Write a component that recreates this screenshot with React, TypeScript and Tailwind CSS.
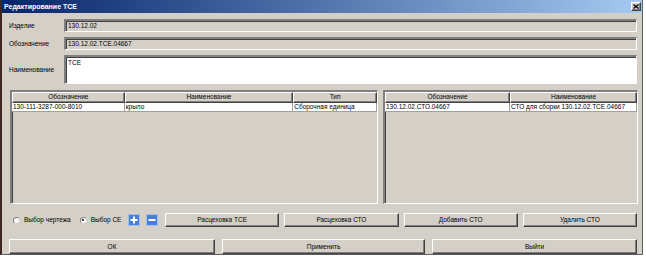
import React from 'react';

const font = "font-['Liberation_Sans',Arial,sans-serif]";

const sunken =
  'border-t-2 border-l-2 border-b border-r border-t-[#808080] border-l-[#808080] border-b-white border-r-white shadow-[inset_1px_1px_0_#404040]';
const raised =
  'border border-t-white border-l-white border-b-[#404040] border-r-[#404040] shadow-[inset_-1px_-1px_0_#808080] bg-[#d4d0c8]';

function Btn({ children, className = '' }: { children: React.ReactNode; className?: string }) {
  return (
    <div className={`${raised} flex items-center justify-center text-[6.5px] text-black ${className}`}>
      {children}
    </div>
  );
}

type Col = { title: string; w: string };

function Table({ cols, row, className = '' }: { cols: Col[]; row: string[]; className?: string }) {
  return (
    <div className={`${sunken} bg-[#d4d0c8] ${className}`}>
      <div className="flex h-[11px]">
        {cols.map((c) => (
          <div
            key={c.title}
            className={`${c.w} ${raised} flex items-center justify-center text-[6.5px] leading-none`}
          >
            {c.title}
          </div>
        ))}
      </div>
      <div className="flex h-[9px] bg-white">
        {cols.map((c, i) => (
          <div
            key={c.title}
            className={`${c.w} border-r border-b border-[#a0a0a0] flex items-center pl-[1px] text-[6.5px] leading-none whitespace-nowrap overflow-hidden`}
          >
            {row[i]}
          </div>
        ))}
      </div>
    </div>
  );
}

function Radio({ checked, label }: { checked?: boolean; label: string }) {
  return (
    <div className="flex items-center gap-[4px]">
      <div className="w-[7px] h-[7px] rounded-full bg-white border border-t-[#808080] border-l-[#808080] border-b-[#d4d0c8] border-r-[#d4d0c8] flex items-center justify-center">
        {checked && <div className="w-[2px] h-[2px] rounded-full bg-black" />}
      </div>
      <span className="text-[6.5px]">{label}</span>
    </div>
  );
}

function IconBtn({ minus }: { minus?: boolean }) {
  return (
    <div className="w-[12px] h-[12px] bg-[#4a7fdc] border border-[#9fbff0] flex items-center justify-center">
      <svg width="8" height="8" viewBox="0 0 8 8">
        <rect x="0.5" y="3" width="7" height="2" fill="white" />
        {!minus && <rect x="3" y="0.5" width="2" height="7" fill="white" />}
      </svg>
    </div>
  );
}

export default function App() {
  return (
    <div className={`w-[646px] h-[258px] bg-white ${font} text-black`}>
      <div className="w-[643px] h-[255px] bg-[#d4d0c8] border-l-2 border-l-[#3c2820] border-b border-r border-b-[#606060] border-r-[#606060] flex flex-col">
        {/* title bar */}
        <div className="h-[13px] bg-gradient-to-r from-[#0a246a] to-[#a6caf0] flex items-center justify-between pl-[2px] pr-[1px]">
          <span className="text-white font-bold text-[7px] leading-none">Редактирование ТСЕ</span>
          <div className={`${raised} w-[10px] h-[9px] flex items-center justify-center`}>
            <svg width="6" height="5" viewBox="0 0 6 5">
              <path d="M0.5 0.5 L5.5 4.5 M5.5 0.5 L0.5 4.5" stroke="black" strokeWidth="1.3" />
            </svg>
          </div>
        </div>

        <div className="flex flex-col pl-[7px] pr-[5px] pt-[6px]">
          <div className="flex items-center h-[13px]">
            <span className="w-[55px] text-[6.5px]">Изделие</span>
            <div className={`${sunken} flex-1 h-full flex items-center pl-[2px] text-[6.5px]`}>130.12.02</div>
          </div>
          <div className="flex items-center h-[13px] mt-[5px]">
            <span className="w-[55px] text-[6.5px]">Обозначение</span>
            <div className={`${sunken} flex-1 h-full flex items-center pl-[2px] text-[6.5px]`}>
              130.12.02.ТСЕ.04667
            </div>
          </div>
          <div className="flex items-center h-[29px] mt-[5px]">
            <span className="w-[55px] text-[6.5px]">Наименование</span>
            <div className={`${sunken} flex-1 h-full bg-white pl-[2px] pt-[1px] text-[6.5px]`}>ТСЕ</div>
          </div>

          <div className="flex gap-[5px] mt-[6px] h-[114px] pl-[1px]">
            <Table
              className="w-[368px]"
              cols={[
                { title: 'Обозначение', w: 'w-[113px]' },
                { title: 'Наименование', w: 'w-[169px]' },
                { title: 'Тип', w: 'w-[84px]' },
              ]}
              row={['130-111-3287-000-8010', 'крыло', 'Сборочная единица']}
            />
            <Table
              className="flex-1"
              cols={[
                { title: 'Обозначение', w: 'w-[125px]' },
                { title: 'Наименование', w: 'w-[127px]' },
              ]}
              row={['130.12.02.СТО.04667', 'СТО для сборки 130.12.02.ТСЕ.04667']}
            />
          </div>

          <div className="flex items-center h-[14px] mt-[9px]">
            <div className="w-[119px] flex items-center gap-[9px] pl-[4px]">
              <Radio label="Выбор чертежа" />
              <Radio checked label="Выбор СЕ" />
            </div>
            <div className="flex gap-[6px] w-[37px]">
              <IconBtn />
              <IconBtn minus />
            </div>
            <div className="flex-1 grid grid-cols-4 gap-[5px] h-full">
              <Btn>Расцеховка ТСЕ</Btn>
              <Btn>Расцеховка СТО</Btn>
              <Btn>Добавить СТО</Btn>
              <Btn>Удалить СТО</Btn>
            </div>
          </div>

          <div className="grid grid-cols-[206px_203px_1fr] gap-[7px] h-[15px] mt-[12px]">
            <Btn>ОК</Btn>
            <Btn>Применить</Btn>
            <Btn>Выйти</Btn>
          </div>
        </div>
      </div>
    </div>
  );
}
